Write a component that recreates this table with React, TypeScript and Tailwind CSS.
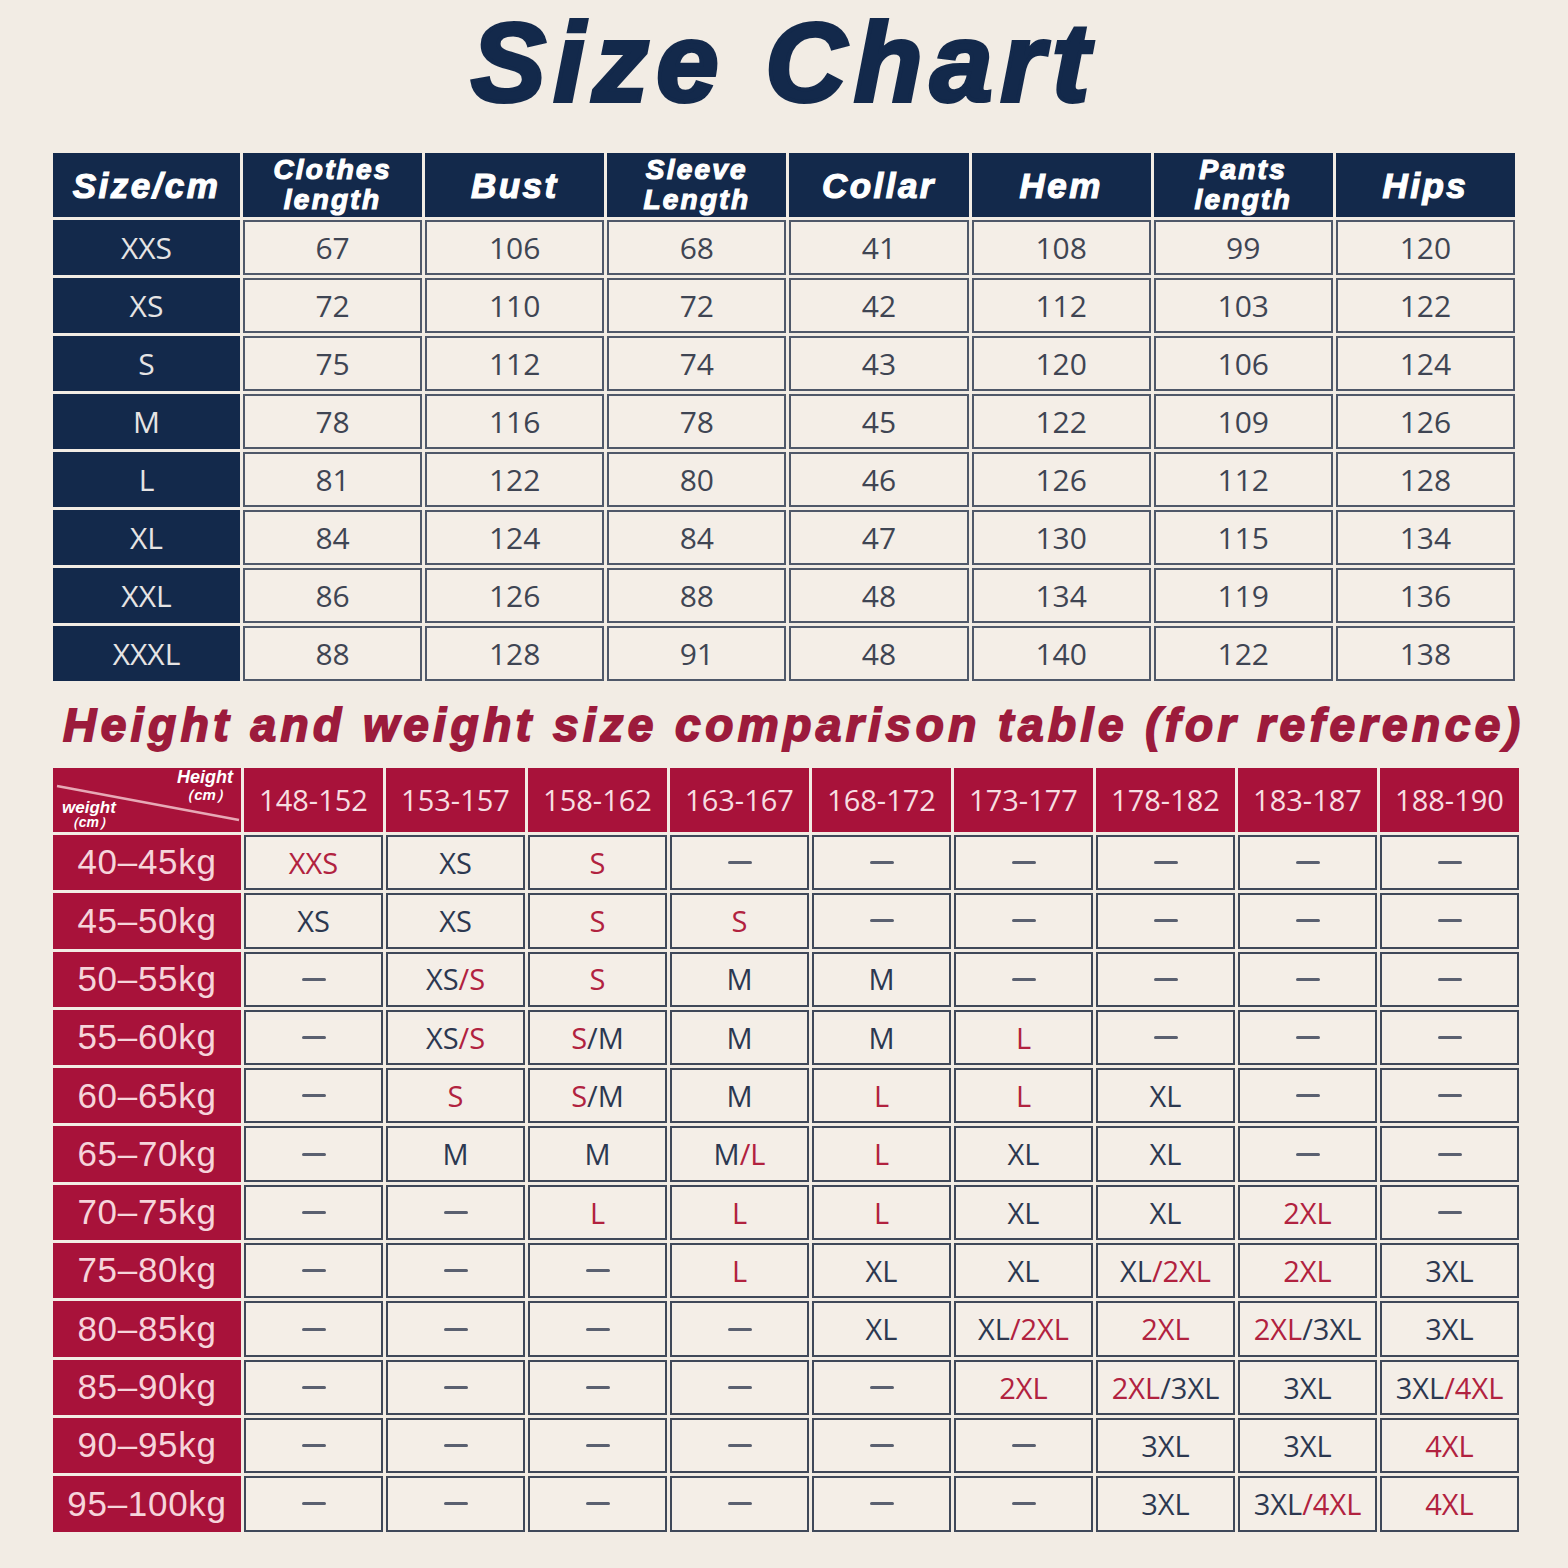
import React from "react";

const sizeHeaders: string[][] = [
  ["Size/cm"],
  ["Clothes", "length"],
  ["Bust"],
  ["Sleeve", "Length"],
  ["Collar"],
  ["Hem"],
  ["Pants", "length"],
  ["Hips"],
];

const sizeRows: string[][] = [
  ["XXS", "67", "106", "68", "41", "108", "99", "120"],
  ["XS", "72", "110", "72", "42", "112", "103", "122"],
  ["S", "75", "112", "74", "43", "120", "106", "124"],
  ["M", "78", "116", "78", "45", "122", "109", "126"],
  ["L", "81", "122", "80", "46", "126", "112", "128"],
  ["XL", "84", "124", "84", "47", "130", "115", "134"],
  ["XXL", "86", "126", "88", "48", "134", "119", "136"],
  ["XXXL", "88", "128", "91", "48", "140", "122", "138"],
];

const heights = ["148-152", "153-157", "158-162", "163-167", "168-172", "173-177", "178-182", "183-187", "188-190"];

const weights = [
  "40–45kg", "45–50kg", "50–55kg", "55–60kg", "60–65kg", "65–70kg",
  "70–75kg", "75–80kg", "80–85kg", "85–90kg", "90–95kg", "95–100kg",
];

// r: = rojo, n: = navy, "-" = vacío
const hw: string[][] = [
  ["r:XXS", "n:XS", "r:S", "-", "-", "-", "-", "-", "-"],
  ["n:XS", "n:XS", "r:S", "r:S", "-", "-", "-", "-", "-"],
  ["-", "n:XS|r:/S", "r:S", "n:M", "n:M", "-", "-", "-", "-"],
  ["-", "n:XS|r:/S", "r:S|n:/M", "n:M", "n:M", "r:L", "-", "-", "-"],
  ["-", "r:S", "r:S|n:/M", "n:M", "r:L", "r:L", "n:XL", "-", "-"],
  ["-", "n:M", "n:M", "n:M|r:/L", "r:L", "n:XL", "n:XL", "-", "-"],
  ["-", "-", "r:L", "r:L", "r:L", "n:XL", "n:XL", "r:2XL", "-"],
  ["-", "-", "-", "r:L", "n:XL", "n:XL", "n:XL|r:/2XL", "r:2XL", "n:3XL"],
  ["-", "-", "-", "-", "n:XL", "n:XL|r:/2XL", "r:2XL", "r:2XL|n:/3XL", "n:3XL"],
  ["-", "-", "-", "-", "-", "r:2XL", "r:2XL|n:/3XL", "n:3XL", "n:3XL|r:/4XL"],
  ["-", "-", "-", "-", "-", "-", "n:3XL", "n:3XL", "r:4XL"],
  ["-", "-", "-", "-", "-", "-", "n:3XL", "n:3XL|r:/4XL", "r:4XL"],
];

function SizeCell({ value }: { value: string }) {
  if (value === "-") {
    return <span className="block w-[24px] h-[3px] bg-[#5a6070] rounded-sm" />;
  }
  return (
    <span>
      {value.split("|").map((part, i) => (
        <span key={i} className={part.startsWith("r:") ? "text-[#b1223f]" : "text-[#2c3850]"}>
          {part.slice(2)}
        </span>
      ))}
    </span>
  );
}

export default function App() {
  return (
    <div className="w-[1568px] h-[1568px] bg-[#f2ece4] font-['Open_Sans',sans-serif] overflow-hidden">
      {/* ----------- TITULO ------------ */}
      <h1 className="text-center text-[112px] leading-[125px] font-bold italic tracking-[0.07em] text-[#13294b] font-['Liberation_Sans',Arial,sans-serif] [-webkit-text-stroke:4px_#13294b]">
        Size Chart
      </h1>

      {/* ----------- TABLA DE MEDIDAS ------------ */}
      <div className="ml-[53px] mt-[28px] w-[1462px] grid grid-cols-[187px_repeat(7,1fr)] grid-rows-[64px_repeat(8,55px)] gap-[3px]">
        {sizeHeaders.map((lines, i) => (
          <div
            key={i}
            className="bg-[#13294b] flex flex-col items-center justify-center text-white italic font-bold font-['Liberation_Sans',Arial,sans-serif] [-webkit-text-stroke:1.2px_#fff]"
          >
            {lines.length === 1 ? (
              <span className="text-[35px] leading-none tracking-[0.07em]">{lines[0]}</span>
            ) : (
              lines.map((l) => (
                <span key={l} className="text-[28px] leading-[30px] tracking-[0.08em]">
                  {l}
                </span>
              ))
            )}
          </div>
        ))}

        {sizeRows.map((row) =>
          row.map((cell, j) =>
            j === 0 ? (
              <div key={row[0] + j} className="bg-[#13294b] flex items-center justify-center text-[30px] text-[#e6e4e4]">
                {cell}
              </div>
            ) : (
              <div
                key={row[0] + j}
                className="bg-[#f4eee7] border-2 border-[#4f5869] flex items-center justify-center text-[30px] text-[#3f4553]"
              >
                {cell}
              </div>
            )
          )
        )}
      </div>

      {/* ----------- SUBTITULO ------------ */}
      <h2 className="mt-[21px] pl-[63px] whitespace-nowrap text-[46px] leading-[46px] font-bold italic tracking-[4.5px] text-[#9c1b3c] font-['Liberation_Sans',Arial,sans-serif] [-webkit-text-stroke:1.8px_#9c1b3c]">
        Height and weight size comparison table (for reference)
      </h2>

      {/* ----------- TABLA ALTURA / PESO ------------ */}
      <div className="ml-[53px] mt-[20px] w-[1466px] grid grid-cols-[188px_repeat(9,1fr)] grid-rows-[64px_repeat(12,55.3px)] gap-[3px]">
        <div className="relative bg-[#a8123a] overflow-hidden font-['Liberation_Sans',Arial,sans-serif] italic font-bold text-white">
          <svg className="absolute inset-0" width="188" height="64" viewBox="0 0 188 64">
            <line x1="4" y1="18" x2="186" y2="52" stroke="#e7a9b6" strokeWidth="2.5" />
          </svg>
          <div className="absolute right-[8px] top-[1px] flex flex-col items-center leading-[17px]">
            <span className="text-[18px]">Height</span>
            <span className="text-[15px]">（cm）</span>
          </div>
          <div className="absolute left-[9px] top-[32px] flex flex-col items-center leading-[15px]">
            <span className="text-[17px]">weight</span>
            <span className="text-[14px]">（cm）</span>
          </div>
        </div>
        {heights.map((h) => (
          <div key={h} className="bg-[#a8123a] flex items-center justify-center text-[29px] text-[#f7dde1]">
            {h}
          </div>
        ))}

        {hw.map((row, i) => (
          <React.Fragment key={weights[i]}>
            <div className="bg-[#a8123a] flex items-center justify-center text-[35px] tracking-[0.02em] text-[#f6d4da] font-['Liberation_Sans',Arial,sans-serif]">
              {weights[i]}
            </div>
            {row.map((v, j) => (
              <div
                key={j}
                className="bg-[#f4eee7] border-2 border-[#3f4859] flex items-center justify-center text-[29px]"
              >
                <SizeCell value={v} />
              </div>
            ))}
          </React.Fragment>
        ))}
      </div>
    </div>
  );
}
